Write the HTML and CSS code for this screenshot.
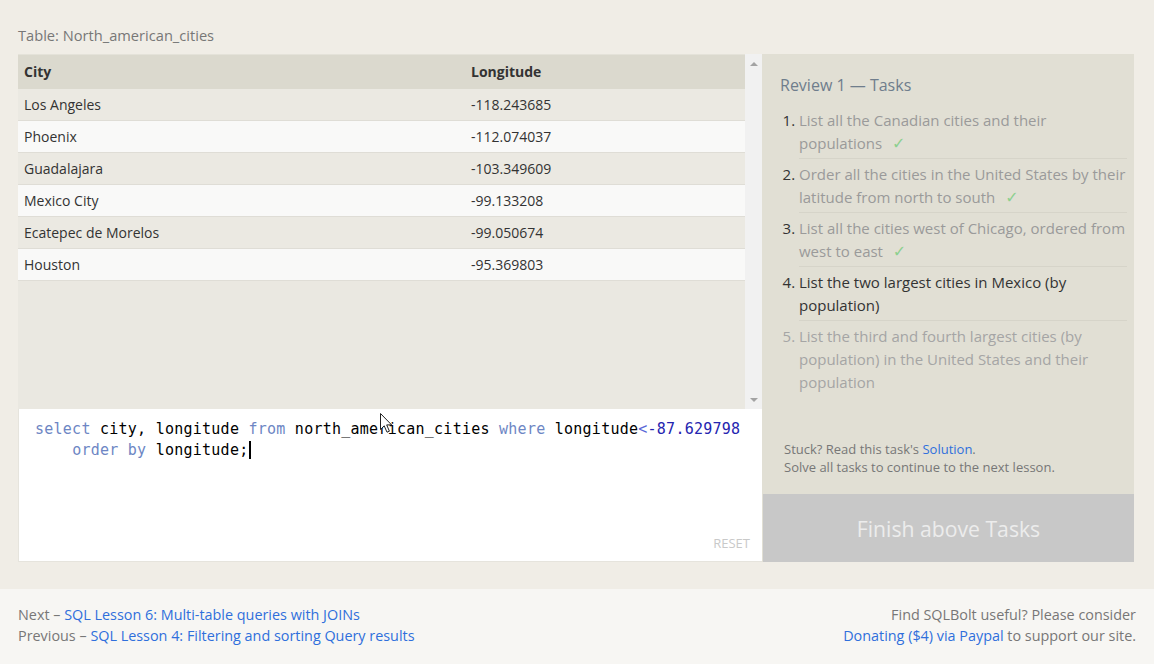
FILE: index.html
```html
<!DOCTYPE html>
<html lang="en">
<head>
<meta charset="utf-8">
<title>SQLBolt Review 1</title>
<link rel="stylesheet" href="styles.css">
</head>
<body>
<main class="page">
  <div class="caption">Table: North_american_cities</div>
  <div class="workspace">
    <section class="left">
      <div class="results">
        <div class="table-area">
          <table class="data">
            <thead>
              <tr><th class="col-city">City</th><th>Longitude</th></tr>
            </thead>
            <tbody>
              <tr><td>Los Angeles</td><td>-118.243685</td></tr>
              <tr><td>Phoenix</td><td>-112.074037</td></tr>
              <tr><td>Guadalajara</td><td>-103.349609</td></tr>
              <tr><td>Mexico City</td><td>-99.133208</td></tr>
              <tr><td>Ecatepec de Morelos</td><td>-99.050674</td></tr>
              <tr><td>Houston</td><td>-95.369803</td></tr>
            </tbody>
          </table>
        </div>
        <div class="scrollbar">
          <span class="arrow arrow-up"></span>
          <span class="arrow arrow-down"></span>
        </div>
      </div>
      <div class="editor">
        <div class="code">
          <div class="line"><span class="kw">select</span> city, longitude <span class="kw">from</span> north_american_cities <span class="kw">where</span> longitude<span class="op">&lt;</span><span class="num">-87.629798</span></div>
          <div class="line">    <span class="kw">order</span> <span class="kw">by</span> longitude;<span class="caret"></span></div>
        </div>
        <div class="reset">RESET</div>
        <svg class="pointer" width="14" height="22" viewBox="0 0 14 22"><path d="M1.5 1.5 L1.5 17.5 L5.2 13.8 L8 20.2 L10.4 19.2 L7.7 12.9 L12.6 12.9 Z" fill="#fff" stroke="#222" stroke-width="1" stroke-linejoin="round"/></svg>
      </div>
    </section>
    <aside class="tasks">
      <h2 class="tasks-title">Review 1 — Tasks</h2>
      <ol class="task-list">
        <li class="done">List all the Canadian cities and their populations <span class="check">✓</span></li>
        <li class="done">Order all the cities in the United States by their latitude from north to south <span class="check">✓</span></li>
        <li class="done">List all the cities west of Chicago, ordered from west to east <span class="check">✓</span></li>
        <li class="active">List the two largest cities in Mexico (by population)</li>
        <li class="todo">List the third and fourth largest cities (by population) in the United States and their population</li>
      </ol>
      <div class="help">
        <div>Stuck? Read this task's <a href="#">Solution</a>.</div>
        <div>Solve all tasks to continue to the next lesson.</div>
      </div>
      <div class="finish">Finish above Tasks</div>
    </aside>
  </div>
</main>
<footer class="footer">
  <div class="nav">
    <div>Next – <a href="#">SQL Lesson 6: Multi-table queries with JOINs</a></div>
    <div>Previous – <a href="#">SQL Lesson 4: Filtering and sorting Query results</a></div>
  </div>
  <div class="donate">
    <div>Find SQLBolt useful? Please consider</div>
    <div><a href="#">Donating ($4) via Paypal</a> to support our site.</div>
  </div>
</footer>
</body>
</html>
```

FILE: styles.css
```css
* { box-sizing: border-box; }

html, body {
  margin: 0;
  padding: 0;
}

body {
  background: #f0ede6;
  font-family: "Open Sans", "Noto Sans", sans-serif;
  font-size: 14px;
  color: #333;
  width: 1154px;
  height: 664px;
  overflow: hidden;
}

a { color: #2f6fdc; text-decoration: none; }

.page {
  padding: 25px 20px 27px 18px;
}

.caption {
  font-size: 14.65px;
  line-height: 20px;
  color: #777;
  margin-bottom: 9px;
}

.workspace {
  display: flex;
  height: 508px;
}

.left {
  width: 744px;
  display: flex;
  flex-direction: column;
}

.results {
  height: 355px;
  display: flex;
  background: #eae8e1;
}

.table-area {
  flex: 1;
}

.data {
  width: 100%;
  border-collapse: collapse;
  font-size: 14px;
}

.data th {
  background: #dbd9ce;
  height: 34px;
  text-align: left;
  font-weight: 700;
  color: #333;
  padding: 0 6px;
  border-top: 1px solid #e4e2d9;
}

.data th.col-city { width: 447px; }

.data td {
  height: 32px;
  padding: 0 6px;
  color: #333;
  border-bottom: 1px solid #dfddd6;
}

.data tbody tr:nth-child(odd) td { background: #ebe9e2; }
.data tbody tr:nth-child(even) td { background: #f9f9f8; }

.scrollbar {
  width: 17px;
  background: #f1f1f1;
  display: flex;
  flex-direction: column;
  justify-content: space-between;
  align-items: center;
  padding: 8px 0 7px;
}

.arrow {
  width: 0;
  height: 0;
  border-left: 4px solid transparent;
  border-right: 4px solid transparent;
}
.arrow-up { border-bottom: 4px solid #a3a3a3; }
.arrow-down { border-top: 4px solid #a3a3a3; }

.editor {
  position: relative;
  height: 153px;
  background: #fff;
  border-left: 1px solid #e6e4dd;
  border-bottom: 1px solid #e6e4dd;
  display: flex;
  flex-direction: column;
  padding: 10px 12px 9px 16px;
}

.code {
  font-family: "DejaVu Sans Mono", "Liberation Mono", monospace;
  font-size: 15px;
  line-height: 21px;
  letter-spacing: 0.25px;
  color: #000;
}

.line { white-space: pre; }

.kw { color: #6d86c4; }
.op { color: #5a68d8; }
.num { color: #2525b0; }

.caret {
  display: inline-block;
  width: 2px;
  height: 18px;
  background: #000;
  vertical-align: -4px;
  margin-left: 1px;
}

.reset {
  margin-top: auto;
  align-self: flex-end;
  font-size: 13px;
  line-height: 18px;
  color: #c9c9c9;
}

.pointer {
  position: absolute;
  left: 360px;
  top: 3px;
}

.tasks {
  width: 372px;
  background: #e1dfd4;
  display: flex;
  flex-direction: column;
  padding: 20px 7px 0 18px;
}

.tasks-title {
  margin: 0;
  font-weight: 400;
  font-size: 16px;
  line-height: 22px;
  color: #6f7d8c;
}

.task-list {
  margin: 9px 0 0;
  padding: 0 0 0 19px;
  font-size: 15px;
  line-height: 23px;
}

.task-list li {
  padding: 4px 0 3px;
  border-bottom: 1px solid #d6d4c9;
}

.task-list li:last-child { border-bottom: none; }

.task-list li.done { color: #9a9a9a; }
.task-list li.done::marker { color: #333; }
.task-list li.active { color: #333; }
.task-list li.todo { color: #a5a5a5; }

.check {
  color: #8dd08f;
  margin-left: 6px;
  font-family: "DejaVu Sans", sans-serif;
  font-size: 16px;
  line-height: 0;
}

.help {
  margin-top: auto;
  padding-left: 4px;
  font-size: 13px;
  line-height: 18px;
  color: #777;
  margin-bottom: 18px;
}

.finish {
  margin-left: -17px;
  margin-right: -7px;
  height: 68px;
  background: #c8c8c8;
  color: #ececec;
  font-size: 21.2px;
  display: flex;
  align-items: center;
  justify-content: center;
}

.footer {
  background: #f7f6f3;
  height: 75px;
  padding: 15px 18px 0 18px;
  display: flex;
  justify-content: space-between;
  font-size: 14.38px;
  line-height: 21px;
  color: #777;
}

.donate { text-align: right; }
```
